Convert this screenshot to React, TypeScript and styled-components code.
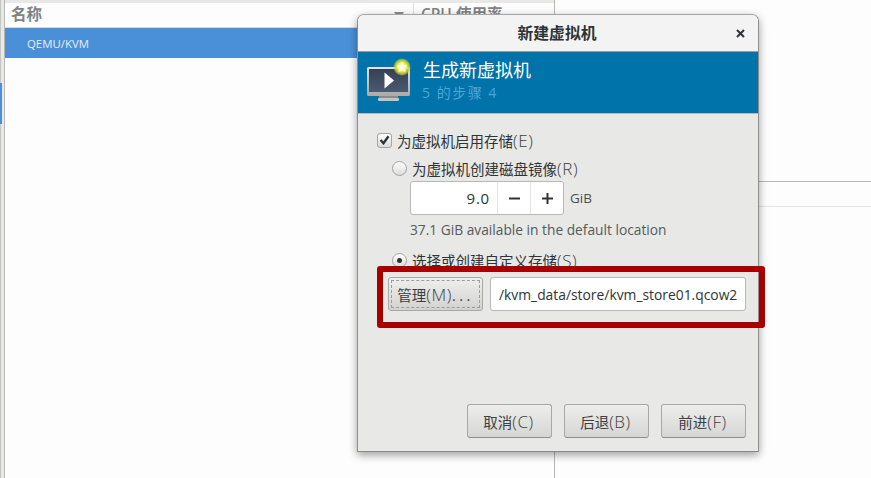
import React from "react";
import styled, { createGlobalStyle } from "styled-components";

const Global = createGlobalStyle`
  html, body { margin: 0; padding: 0; background: #fdfdfd; overflow: hidden; }
  #root { width: 871px; height: 478px; }
  * { box-sizing: border-box; }
`;
const FONT = `"Open Sans", "Noto Sans", "Noto Sans CJK SC", sans-serif`;

const Desktop = styled.div`
  position: relative; width: 871px; height: 478px; overflow: hidden;
  display: flex; background: #fdfdfd; font-family: ${FONT};
`;
const Rail = styled.div`
  width: 5px; flex: none; display: flex; flex-direction: column;
  border-left: 1px solid #c4c4c1; border-right: 1px solid #b8b8b6; background: #e8e8e7;
`;
const RailMark = styled.div`width: 2px; height: 41px; margin: 83px 0 0 -1px; background: #4a90d9;`;
const ListPane = styled.div`width: 550px; flex: none; border-right: 1px solid #b6b6b3; display: flex; flex-direction: column;`;
const TopStrip = styled.div`height: 3px; background: #e8e8e7; flex: none;`;
const HeaderRow = styled.div`height: 25px; display: flex; border-bottom: 1px solid #d6d6d4;`;
const NameHead = styled.div`
  width: 409px; flex: none; display: flex; align-items: center; justify-content: space-between;
  padding: 0 9px 3px 6px; color: #7f8383; font-size: 15.5px; font-weight: 600; border-right: 1px solid #dcdcda;
`;
const CpuHead = styled.div`padding: 0 0 0 7px; color: #7f8383; font-size: 15.5px; font-weight: 600; line-height: 22px;`;
const SelectedRow = styled.div`
  height: 30px; background: #4a90d9; color: #e6eefa; font-size: 11.4px; display: flex; align-items: center; padding-left: 22px;
`;
const DetailPane = styled.div`flex: 1; padding-top: 181px;`;
const DarkRule = styled.div`height: 1px; background: #b6b6b3;`;
const LightRule = styled.div`height: 1px; margin-top: 24px; background: #e4e4e2;`;

const Dialog = styled.div`
  position: absolute; left: 357px; top: 14px; width: 402px; height: 438px;
  display: flex; flex-direction: column; background: #e8e8e7;
  border: 1px solid #8f8f8d; border-top-color: #a5a5a3; border-bottom-color: #8a8a88; border-radius: 7px 7px 0 0;
  box-shadow: 0 3px 9px rgba(0,0,0,.38);
`;
const TitleBar = styled.div`
  position: relative; height: 37px; flex: none; background: #f3f3f3; border-radius: 6px 6px 0 0;
  border-bottom: 1px solid #9b9b99; display: flex; align-items: center; justify-content: center;
  color: #2e3436; font-size: 15.8px; font-weight: 700; padding: 0 2px 1px 0;
`;
const CloseIcon = styled.svg`position: absolute; right: 13px; top: 14px; width: 9px; height: 9px;`;
const Banner = styled.div`
  height: 62px; flex: none; background: #0073aa; display: flex; align-items: flex-start;
  padding: 5px 0 0 8px; gap: 11px; border-bottom: 1px solid #b9b9b7;
`;
const BannerIcon = styled.svg`width: 46px; height: 46px; flex: none;`;
const BannerText = styled.div`display: flex; flex-direction: column; padding-top: 1px;`;
const BannerTitle = styled.div`color: #fff; font-size: 18px; line-height: 24px;`;
const BannerSub = styled.div`color: #4ea6d6; font-size: 14px; line-height: 20px; letter-spacing: 1.5px; margin: 1px 0 0 -1px; white-space: pre;`;

const Body = styled.div`flex: 1; display: flex; flex-direction: column; padding: 16px 12px 0 19px; color: #2e3436; font-size: 14.5px;`;
const CheckRow = styled.div`display: flex; align-items: center; gap: 5px; height: 20px;`;
const CheckBox = styled.div`
  width: 15px; height: 15px; border: 1px solid #a3a3a1; border-radius: 3px; background: linear-gradient(#fff, #dcdcdb);
  display: flex; align-items: center; justify-content: center;
`;
const RadioRow = styled.div<{ $top: number }>`
  display: flex; align-items: center; gap: 5px; height: 20px; margin: ${p => p.$top}px 0 0 15px;
`;
const Radio = styled.div<{ $on?: boolean }>`
  width: 15px; height: 15px; border-radius: 50%; border: 1px solid #a3a3a1; background: linear-gradient(#fff, #dcdcdb);
  display: flex; align-items: center; justify-content: center;
  &::after { content: ""; width: 5px; height: 5px; border-radius: 50%; background: ${p => (p.$on ? "#2e3436" : "transparent")}; }
`;
const Label = styled.span`white-space: nowrap;`;
const Mnemonic = styled.span`font-size: 17px; font-weight: 300; letter-spacing: 0.6px; line-height: 1; color: #3c4041;`;
const Dots = styled.span`letter-spacing: 3.4px;`;
const SpinRow = styled.div`display: flex; align-items: center; gap: 6px; margin: 3px 0 0 33px; height: 34px;`;
const Spin = styled.div`
  width: 154px; height: 34px; display: flex; background: #fff; border: 1px solid #b8b8b6; border-radius: 3px;
`;
const SpinValue = styled.div`flex: 1; display: flex; align-items: center; justify-content: flex-end; padding-right: 7px; font-size: 15px; letter-spacing: 0.8px;`;
const SpinButton = styled.div`width: 33px; border-left: 1px solid #e4e4e2; display: flex; align-items: center; justify-content: center;`;
const Unit = styled.span`font-size: 13.5px; color: #4a4f50;`;
const Hint = styled.div`margin: 6px 0 0 33px; font-size: 13.75px; line-height: 18px; color: #555a5b;`;
const Highlight = styled.div`
  position: absolute; left: 377px; top: 266px; width: 388px; height: 62px;
  border: 6px solid #a80000; border-radius: 3px; pointer-events: none;
`;
const StoreRow = styled.div`display: flex; gap: 7px; margin: 7px 0 0 11px; height: 34px;`;
const ManageButton = styled.div`
  width: 95px; height: 34px; flex: none; display: flex; align-items: center; justify-content: center;
  border: 1px solid #a8a8a6; border-radius: 3px; background: linear-gradient(#efefee, #d2d2d0);
  color: #3c4041; outline: 1px dashed #9c9c9a; outline-offset: -4px;
`;
const PathInput = styled.div`
  width: 256px; height: 34px; display: flex; align-items: center; padding-left: 8px; background: #fff;
  border: 1px solid #b8b8b6; border-radius: 3px; font-size: 13.85px; white-space: nowrap; overflow: hidden;
`;
const Footer = styled.div`margin-top: auto; display: flex; justify-content: flex-end; gap: 12px; padding: 0 0 13px;`;
const FootButton = styled.div`
  width: 85px; height: 34px; display: flex; align-items: center; justify-content: center; padding-right: 2px;
  border: 1px solid #a8a8a6; border-bottom-color: #8f8f8d; border-radius: 3px; background: linear-gradient(#ededec, #d6d6d4);
  color: #3c4041;
`;

export default function App() {
  return (
    <Desktop>
      <Global />
      <Rail><RailMark /></Rail>
      <ListPane>
        <TopStrip />
        <HeaderRow>
          <NameHead>
            名称
            <svg width="10" height="3" viewBox="0 0 10 3"><path d="M0 0h10L8 3H2z" fill="#8a8d8d" /></svg>
          </NameHead>
          <CpuHead>CPU 使用率</CpuHead>
        </HeaderRow>
        <SelectedRow>QEMU/KVM</SelectedRow>
      </ListPane>
      <DetailPane>
        <DarkRule />
        <LightRule />
      </DetailPane>
      <Dialog>
        <TitleBar>
          新建虚拟机
          <CloseIcon viewBox="0 0 9 9"><path d="M1 1l7 7M8 1L1 8" stroke="#2e3436" strokeWidth="2" /></CloseIcon>
        </TitleBar>
        <Banner>
          <BannerIcon viewBox="0 0 46 46">
            <defs>
              <linearGradient id="scr" x1="0" y1="0" x2="0" y2="1"><stop offset="0" stopColor="#364055" /><stop offset="1" stopColor="#4a5a70" /></linearGradient>
              <linearGradient id="frm" x1="0" y1="0" x2="0" y2="1"><stop offset="0" stopColor="#e2e2e0" /><stop offset="1" stopColor="#a9a9a7" /></linearGradient>
              <radialGradient id="glow"><stop offset="0.45" stopColor="#f4f56a" /><stop offset="0.8" stopColor="#c8d020" stopOpacity=".8" /><stop offset="1" stopColor="#c8d020" stopOpacity="0" /></radialGradient>
            </defs>
            <rect x="1" y="10" width="43" height="29" rx="1.5" fill="url(#frm)" />
            <rect x="3" y="12" width="39" height="23" fill="url(#scr)" />
            <path d="M18.5 15.5L28 23.5 18.5 31.5z" fill="#fff" />
            <rect x="13" y="39" width="19" height="2" fill="#8a8a88" />
            <rect x="12" y="41" width="21" height="3" rx="1" fill="#c4c4c2" />
            <circle cx="36" cy="10" r="9" fill="url(#glow)" />
            <path d="M36 4.5l1.7 3.6 3.9.5-2.9 2.7.8 3.9-3.5-2-3.5 2 .8-3.9-2.9-2.7 3.9-.5z" fill="#fffbe0" />
          </BannerIcon>
          <BannerText>
            <BannerTitle>生成新虚拟机</BannerTitle>
            <BannerSub>5 的步骤 4</BannerSub>
          </BannerText>
        </Banner>
        <Body>
          <CheckRow>
            <CheckBox>
              <svg width="11" height="10" viewBox="0 0 11 10"><path d="M1.5 5l3 3.2L9.5 1.2" fill="none" stroke="#2e3436" strokeWidth="2.4" /></svg>
            </CheckBox>
            <Label>为虚拟机启用存储<Mnemonic>(E)</Mnemonic></Label>
          </CheckRow>
          <RadioRow $top={8}><Radio /><Label>为虚拟机创建磁盘镜像<Mnemonic>(R)</Mnemonic></Label></RadioRow>
          <SpinRow>
            <Spin>
              <SpinValue>9.0</SpinValue>
              <SpinButton><svg width="11" height="11" viewBox="0 0 11 11"><path d="M0 5.5h11" stroke="#2e3436" strokeWidth="2" /></svg></SpinButton>
              <SpinButton><svg width="11" height="11" viewBox="0 0 11 11"><path d="M0 5.5h11M5.5 0v11" stroke="#2e3436" strokeWidth="2" /></svg></SpinButton>
            </Spin>
            <Unit>GiB</Unit>
          </SpinRow>
          <Hint>37.1 GiB available in the default location</Hint>
          <RadioRow $top={11}><Radio $on /><Label>选择或创建自定义存储<Mnemonic>(S)</Mnemonic></Label></RadioRow>
          <StoreRow>
            <ManageButton><Label>管理<Mnemonic>(M)</Mnemonic><Dots>...</Dots></Label></ManageButton>
            <PathInput>/kvm_data/store/kvm_store01.qcow2</PathInput>
          </StoreRow>
          <Footer>
            <FootButton><Label>取消<Mnemonic>(C)</Mnemonic></Label></FootButton>
            <FootButton><Label>后退<Mnemonic>(B)</Mnemonic></Label></FootButton>
            <FootButton><Label>前进<Mnemonic>(F)</Mnemonic></Label></FootButton>
          </Footer>
        </Body>
      </Dialog>
      <Highlight />
    </Desktop>
  );
}
